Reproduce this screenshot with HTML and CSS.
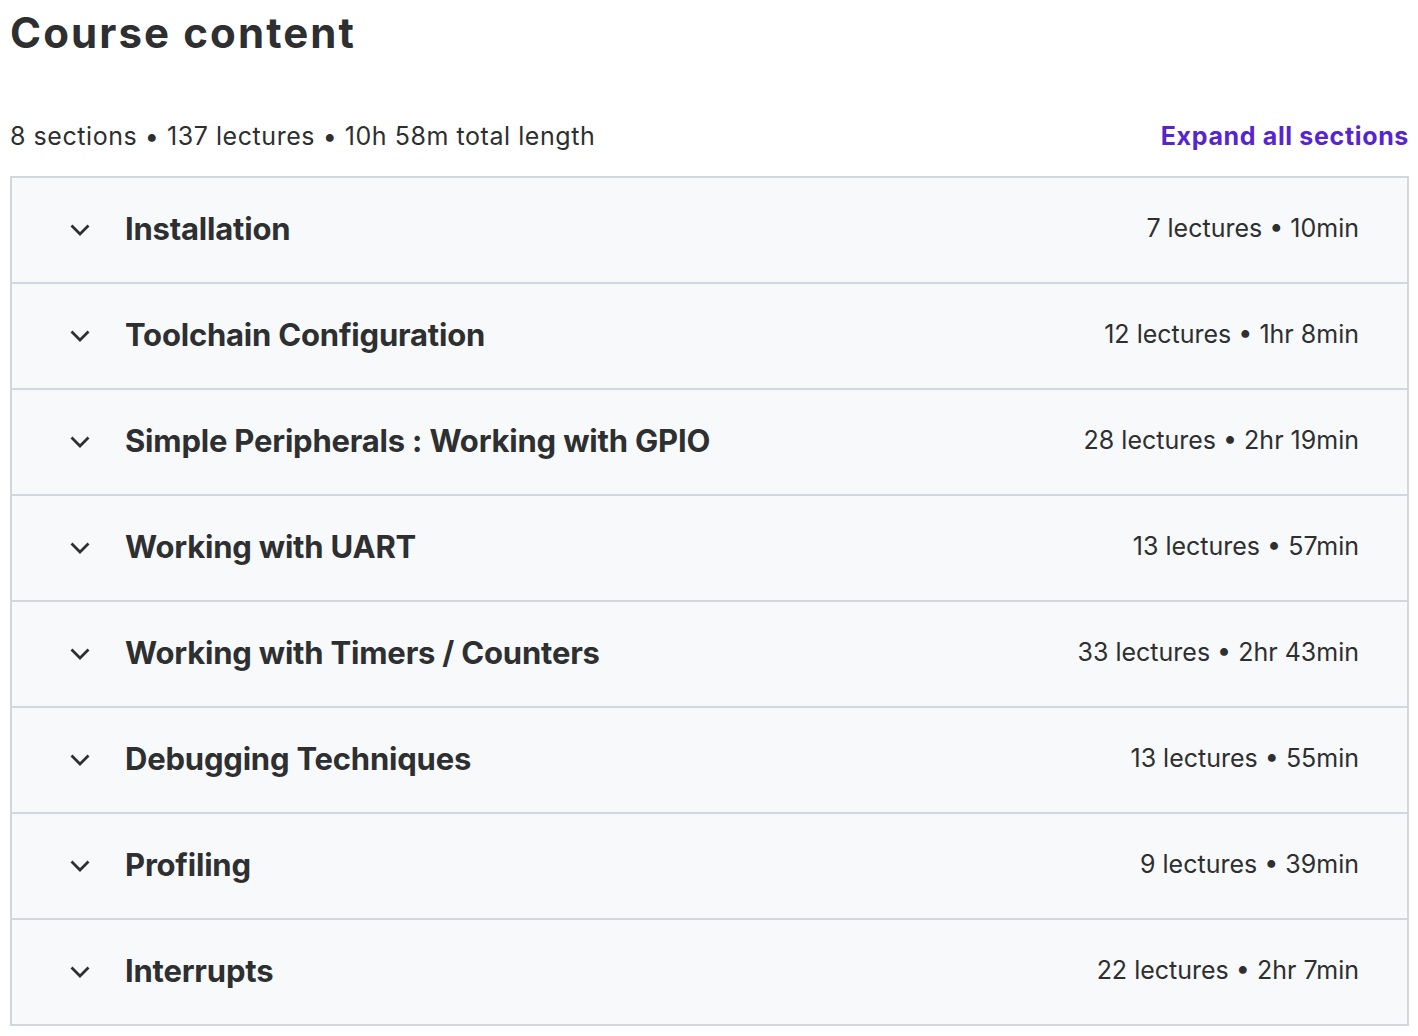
FILE: index.html
```html
<!DOCTYPE html>
<html>
<head>
<meta charset="utf-8">
<link rel="stylesheet" href="styles.css">
</head>
<body>
<div class="page">
  <h2 class="title">Course content</h2>
  <div class="meta-row">
    <span class="meta">8 sections • 137 lectures • 10h 58m total length</span>
    <button class="expand">Expand all sections</button>
  </div>
  <div class="sections">
    <div class="section"><span class="chev"><svg viewBox="0 0 20 12"><path d="M1.5 1.5L10 10l8.5-8.5"/></svg></span><span class="name">Installation</span><span class="stats">7 lectures • 10min</span></div>
    <div class="section"><span class="chev"><svg viewBox="0 0 20 12"><path d="M1.5 1.5L10 10l8.5-8.5"/></svg></span><span class="name">Toolchain Configuration</span><span class="stats">12 lectures • 1hr 8min</span></div>
    <div class="section"><span class="chev"><svg viewBox="0 0 20 12"><path d="M1.5 1.5L10 10l8.5-8.5"/></svg></span><span class="name">Simple Peripherals : Working with GPIO</span><span class="stats">28 lectures • 2hr 19min</span></div>
    <div class="section"><span class="chev"><svg viewBox="0 0 20 12"><path d="M1.5 1.5L10 10l8.5-8.5"/></svg></span><span class="name">Working with UART</span><span class="stats">13 lectures • 57min</span></div>
    <div class="section"><span class="chev"><svg viewBox="0 0 20 12"><path d="M1.5 1.5L10 10l8.5-8.5"/></svg></span><span class="name">Working with Timers / Counters</span><span class="stats">33 lectures • 2hr 43min</span></div>
    <div class="section"><span class="chev"><svg viewBox="0 0 20 12"><path d="M1.5 1.5L10 10l8.5-8.5"/></svg></span><span class="name">Debugging Techniques</span><span class="stats">13 lectures • 55min</span></div>
    <div class="section"><span class="chev"><svg viewBox="0 0 20 12"><path d="M1.5 1.5L10 10l8.5-8.5"/></svg></span><span class="name">Profiling</span><span class="stats">9 lectures • 39min</span></div>
    <div class="section"><span class="chev"><svg viewBox="0 0 20 12"><path d="M1.5 1.5L10 10l8.5-8.5"/></svg></span><span class="name">Interrupts</span><span class="stats">22 lectures • 2hr 7min</span></div>
  </div>
</div>
</body>
</html>
```
FILE: styles.css
```css
html, body {
  margin: 0;
  padding: 0;
  background: #ffffff;
}
body {
  font-family: Inter, "Noto Sans", sans-serif;
  color: #2d2f31;
}
.page {
  padding: 0 9px 0 10px;
}
.title {
  margin: 0;
  padding-top: 8px;
  font-size: 42px;
  line-height: 50px;
  font-weight: 700;
  letter-spacing: 2.1px;
}
.meta-row {
  display: flex;
  justify-content: space-between;
  align-items: center;
  margin-top: 60px;
  height: 36px;
  margin-bottom: 22px;
}
.meta {
  font-size: 25px;
  font-weight: 400;
  letter-spacing: 0.55px;
}
.expand {
  border: 0;
  background: none;
  padding: 0;
  font-family: inherit;
  font-size: 25px;
  font-weight: 700;
  letter-spacing: 0.65px;
  color: #5624d0;
  cursor: pointer;
}
.sections {
  border: 2px solid #d1d7dc;
  border-top: 0;
}
.section {
  box-sizing: border-box;
  display: flex;
  align-items: center;
  height: 106px;
  border-top: 2px solid #d1d7dc;
  background: #f7f9fa;
  padding: 0 48px 4px 58px;
}
.chev {
  width: 20px;
  height: 12px;
  display: flex;
  margin-right: 35px;
  margin-top: 3px;
}
.chev svg {
  width: 20px;
  height: 12px;
  fill: none;
  stroke: #2d2f31;
  stroke-width: 2.8;
  stroke-linecap: butt;
  stroke-linejoin: miter;
}
.name {
  flex: 1;
  font-size: 31px;
  font-weight: 700;
  letter-spacing: -0.2px;
}
.stats {
  font-size: 25px;
  font-weight: 400;
}
```
